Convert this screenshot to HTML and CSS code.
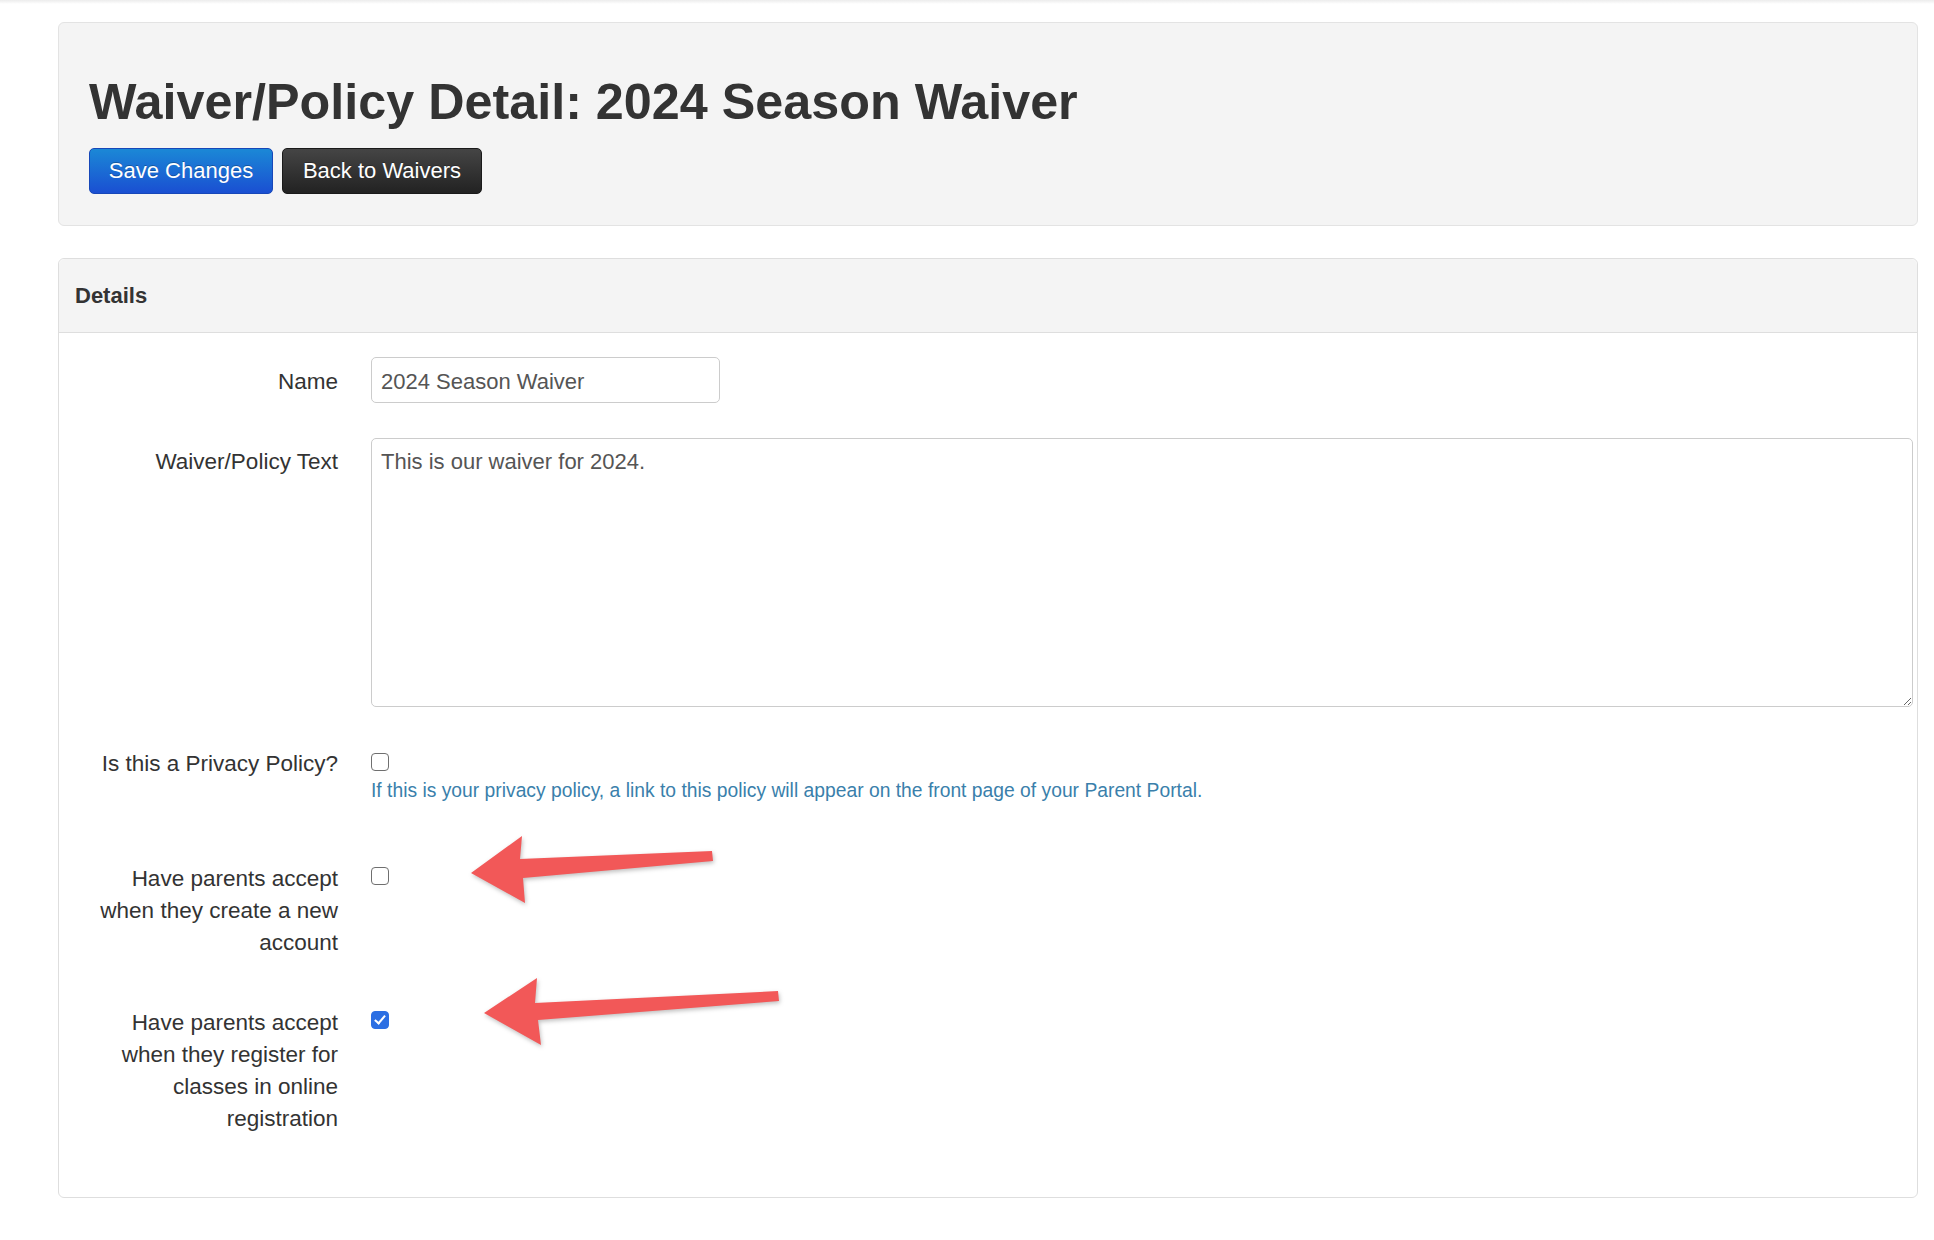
FILE: index.html
```html
<!DOCTYPE html>
<html lang="en">
<head>
  <meta charset="UTF-8" />
  <title>Waiver/Policy Detail: 2024 Season Waiver</title>
  <link rel="stylesheet" href="styles.css">
</head>
<body>
  <div class="topbar"></div>

  <div class="page">
    <div class="hero">
      <h1>Waiver/Policy Detail: 2024 Season Waiver</h1>
      <div class="actions">
        <button class="btn btn-primary">Save Changes</button>
        <button class="btn btn-dark">Back to Waivers</button>
      </div>
    </div>

    <div class="panel">
      <div class="panel-heading">Details</div>
      <form class="panel-body">
        <div class="form-row row-name">
          <label for="name">Name</label>
          <div class="control">
            <input type="text" id="name" class="text-input" value="2024 Season Waiver" />
          </div>
        </div>

        <div class="form-row row-text">
          <label for="body">Waiver/Policy Text</label>
          <div class="control">
            <textarea id="body" class="text-area">This is our waiver for 2024.</textarea>
          </div>
        </div>

        <div class="form-row row-privacy">
          <label for="privacy">Is this a Privacy Policy?</label>
          <div class="control">
            <input type="checkbox" id="privacy" class="check" />
            <p class="help">If this is your privacy policy, a link to this policy will appear on the front page of your Parent Portal.</p>
          </div>
        </div>

        <div class="form-row row-account">
          <label for="onAccount">Have parents accept when they create a new account</label>
          <div class="control">
            <input type="checkbox" id="onAccount" class="check" />
          </div>
        </div>

        <div class="form-row row-register">
          <label for="onRegister">Have parents accept when they register for classes in online registration</label>
          <div class="control">
            <input type="checkbox" id="onRegister" class="check" checked />
          </div>
        </div>
      </form>
    </div>
  </div>

  <!-- annotation arrows drawn over the form -->
  <svg class="annotations" width="1934" height="1240" viewBox="0 0 1934 1240">
    <polygon class="arrow" points="471,873 522,836 520,859 712,851 713,861 523,878 525,903" />
    <polygon class="arrow" points="484,1013 537,978 535,1003 778,991 779,1001 538,1020 541,1045" />
  </svg>
</body>
</html>
```

FILE: styles.css
```css
body {
  margin: 0;
  font-family: 'Liberation Sans', Arial, sans-serif;
  color: #333;
  background: #fff;
  position: relative;
}

.topbar {
  height: 4px;
  background: linear-gradient(#ececec, #fff);
}

.page {
  padding: 18px 16px 0 58px;
}

.hero {
  background-color: #f4f4f4;
  border: 1px solid #e3e3e3;
  border-radius: 6px;
  padding: 49px 30px 31px;
}

.hero h1 {
  margin: 0;
  font-size: 50.3px;
  line-height: 60px;
  font-weight: bold;
  color: #333;
}

.actions {
  display: flex;
  gap: 9px;
  margin-top: 16px;
}

.btn {
  height: 46px;
  padding: 0;
  border-radius: 5px;
  font-family: inherit;
  font-size: 22px;
  color: #fff;
  white-space: nowrap;
  cursor: pointer;
  text-shadow: 0 -1px 0 rgba(0, 0, 0, 0.25);
}

.btn-primary {
  width: 184px;
  background: linear-gradient(#1b88d6, #1a4fd2);
  border: 1px solid #1747b8;
}

.btn-dark {
  width: 200px;
  background: linear-gradient(#454545, #222);
  border: 1px solid #1a1a1a;
}

.panel {
  margin-top: 32px;
  border: 1px solid #dedede;
  border-radius: 6px;
  background: #fff;
}

.panel-heading {
  height: 73px;
  line-height: 73px;
  padding: 0 16px;
  background-color: #f4f4f4;
  border-bottom: 1px solid #dedede;
  border-radius: 6px 6px 0 0;
  font-size: 22px;
  font-weight: bold;
}

.panel-body {
  margin: 0;
  padding: 24px 4px 62px 39px;
}

.form-row {
  display: grid;
  grid-template-columns: 240px 1fr;
  column-gap: 33px;
  align-items: start;
}

.form-row label {
  text-align: right;
  font-size: 22.5px;
  line-height: 32px;
  color: #333;
}

.row-name label { padding-top: 9px; }

.row-text { margin-top: 35px; }
.row-text label { padding-top: 8px; }

.row-privacy { margin-top: 41px; }
.row-privacy .check { margin-top: 5px; }

.row-account { margin-top: 59px; }
.row-register { margin-top: 48px; }
.row-account .check,
.row-register .check { margin-top: 4px; }

.text-input {
  box-sizing: border-box;
  width: 349px;
  height: 46px;
  padding: 3px 9px 0;
  border: 1px solid #ccc;
  border-radius: 5px;
  font-family: inherit;
  font-size: 22px;
  color: #555;
}

.text-area {
  display: block;
  box-sizing: border-box;
  width: 100%;
  height: 269px;
  padding: 7px 9px 5px;
  border: 1px solid #ccc;
  border-radius: 5px;
  font-family: inherit;
  font-size: 22px;
  line-height: 32px;
  color: #555;
  resize: vertical;
}

.check {
  appearance: none;
  display: block;
  position: relative;
  box-sizing: border-box;
  width: 18px;
  height: 18px;
  margin: 0;
  border: 1.5px solid #6f6f6f;
  border-radius: 4px;
  background: #fff;
}

.check:checked {
  background: #2c6fe3;
  border-color: #2c6fe3;
}

.check:checked::after {
  content: "";
  position: absolute;
  left: 5px;
  top: 1px;
  width: 4px;
  height: 9px;
  border: solid #fff;
  border-width: 0 2.5px 2.5px 0;
  transform: rotate(40deg);
}

.help {
  margin: 7px 0 0;
  font-size: 19.3px;
  line-height: 26px;
  color: #3a7fab;
}

.annotations {
  position: absolute;
  top: 0;
  left: 0;
  pointer-events: none;
}

.arrow {
  fill: #f25858;
  filter: drop-shadow(1px 2px 2px rgba(0, 0, 0, 0.25));
}
```
